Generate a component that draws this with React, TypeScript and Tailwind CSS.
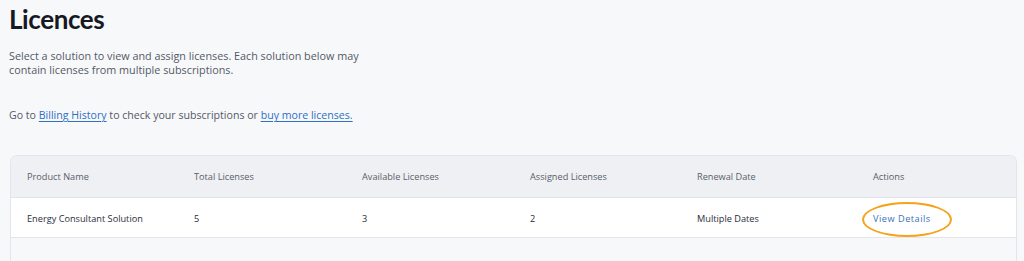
const columns = ['Product Name', 'Total Licenses', 'Available Licenses', 'Assigned Licenses', 'Renewal Date', 'Actions'];

const row = {
  product: 'Energy Consultant Solution',
  total: 5,
  available: 3,
  assigned: 2,
  renewal: 'Multiple Dates',
};

export default function App() {
  return (
    <div
      className="h-[261px] w-[1024px] overflow-hidden bg-[#f7f8fa] text-[#4a4d57]"
      style={{ fontFamily: '"Open Sans", "Noto Sans", sans-serif' }}
    >
      <div className="pl-[9px] pr-[7px]">
        <h1
          className="pt-[1px] text-[26px] font-bold leading-[36px] tracking-[-0.4px] text-[#161823]"
          style={{ fontFamily: 'Lato, "Open Sans", sans-serif' }}
        >
          Licences
        </h1>

        <p className="mt-[12px] w-[370px] text-[10.8px] leading-[14px] text-[#545866]">
          Select a solution to view and assign licenses. Each solution below may contain licenses from multiple subscriptions.
        </p>

        <p className="mt-[31px] text-[10.6px] leading-[14px] text-[#545866]">
          Go to <a className="text-[#2f6fc4] underline underline-offset-2">Billing History</a> to check your subscriptions or{' '}
          <a className="text-[#2f6fc4] underline underline-offset-2">buy more licenses.</a>
        </p>

        <div className="ml-[1px] mt-[33px] h-[120px] rounded-t-[7px] border border-b-0 border-[#e3e5ea]">
          <div className="grid h-[42px] grid-cols-[167px_168px_168px_167px_176px_1fr] items-center rounded-t-[7px] border-b border-[#e3e5ea] bg-[#eef0f4] pl-[16px] pt-[1px] text-[9.2px] text-[#5a5e6b]">
            {columns.map((c) => (
              <span key={c}>{c}</span>
            ))}
          </div>
          <div className="grid h-[40px] grid-cols-[167px_168px_168px_167px_176px_1fr] items-center border-b border-[#e3e5ea] bg-white pl-[16px] pt-[2px] text-[9.2px] text-[#2b2e38]">
            <span>{row.product}</span>
            <span>{row.total}</span>
            <span>{row.available}</span>
            <span>{row.assigned}</span>
            <span>{row.renewal}</span>
            <span className="relative inline-block w-fit">
              <a className="tracking-[0.5px] text-[#3a72c0]">View Details</a>
              <span className="pointer-events-none absolute left-[-11px] top-[-10px] h-[35px] w-[90px] rounded-[50%] border-2 border-[#f5a31a]" />
            </span>
          </div>
        </div>
      </div>
    </div>
  );
}
